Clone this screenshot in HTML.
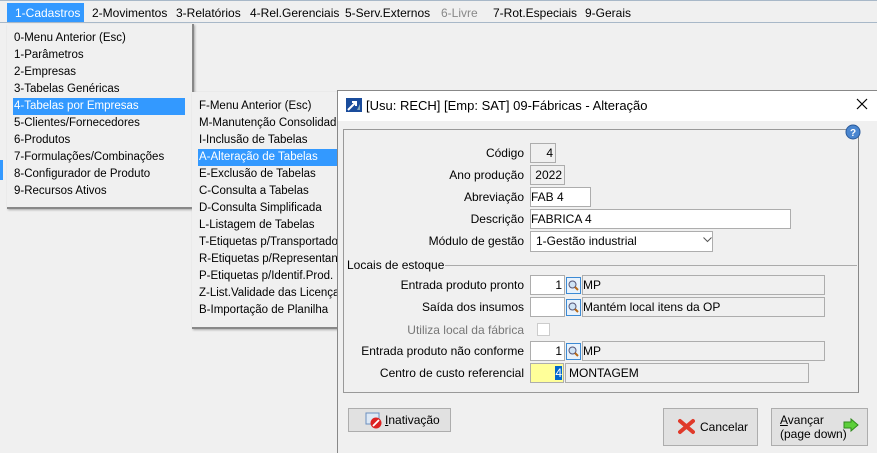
<!DOCTYPE html>
<html><head><meta charset="utf-8"><style>
*{box-sizing:border-box;margin:0;padding:0}
body{width:877px;height:453px;overflow:hidden;background:#f0f0f0;font-family:"Liberation Sans",sans-serif;font-size:12px;color:#000;position:relative}
.a{position:absolute;white-space:nowrap}
.mb{position:absolute;left:0;top:0;width:877px;height:23px;background:#f0f0f0;border-top:1px solid #a8b8c8;border-bottom:1px solid #a8b8c8}
.mi{position:absolute;top:5px;font-size:12px}
.menu{position:absolute;background:#f0f0f0;border-right:2px solid #888;border-bottom:2px solid #888;box-shadow:1px 1px 2px #aaa;overflow:hidden}
.it{position:absolute;left:7px;height:17px;line-height:17px;white-space:nowrap;font-size:11.5px}
.hl{background:#3399ff;color:#fff}
.lbl{position:absolute;text-align:right;width:200px;line-height:20px;white-space:nowrap}
.box{position:absolute;background:#fff;border:1px solid #adadad;height:20px;line-height:18px;padding:0 2px;white-space:nowrap}
.ro{background:#f0f0f0}
.btn{position:absolute;background:#e1e1e1;border:1px solid #adadad}
</style></head><body>
<div class="mb">
<div class="a" style="left:7px;top:2px;width:77px;height:19px;background:#3399ff"></div>
<span class="mi" style="left:15px;color:#fff">1-Cadastros</span>
<span class="mi" style="left:92px">2-Movimentos</span>
<span class="mi" style="left:176px">3-Relatórios</span>
<span class="mi" style="left:250px">4-Rel.Gerenciais</span>
<span class="mi" style="left:345px">5-Serv.Externos</span>
<span class="mi" style="left:441px;color:#888">6-Livre</span>
<span class="mi" style="left:493px">7-Rot.Especiais</span>
<span class="mi" style="left:585px">9-Gerais</span>
</div>
<div class="a" style="left:0;top:160px;width:3px;height:20px;background:#3399ff"></div>

<div class="menu" style="left:7px;top:24px;width:187px;height:185px">
<div class="it" style="top:6px">0-Menu Anterior (Esc)</div>
<div class="it" style="top:23px">1-Parâmetros</div>
<div class="it" style="top:40px">2-Empresas</div>
<div class="it" style="top:57px">3-Tabelas Genéricas</div>
<div class="it hl" style="top:74px;left:6px;width:172px;padding-left:1px">4-Tabelas por Empresas</div>
<div class="it" style="top:91px">5-Clientes/Fornecedores</div>
<div class="it" style="top:108px">6-Produtos</div>
<div class="it" style="top:125px">7-Formulações/Combinações</div>
<div class="it" style="top:142px">8-Configurador de Produto</div>
<div class="it" style="top:159px">9-Recursos Ativos</div>
</div>

<div class="menu" style="left:192px;top:92px;width:160px;height:237px">
<div class="it" style="top:6px">F-Menu Anterior (Esc)</div>
<div class="it" style="top:23px">M-Manutenção Consolidada</div>
<div class="it" style="top:40px">I-Inclusão de Tabelas</div>
<div class="it hl" style="top:57px;left:6px;width:150px;padding-left:1px">A-Alteração de Tabelas</div>
<div class="it" style="top:74px">E-Exclusão de Tabelas</div>
<div class="it" style="top:91px">C-Consulta a Tabelas</div>
<div class="it" style="top:108px">D-Consulta Simplificada</div>
<div class="it" style="top:125px">L-Listagem de Tabelas</div>
<div class="it" style="top:142px">T-Etiquetas p/Transportador</div>
<div class="it" style="top:159px">R-Etiquetas p/Representante</div>
<div class="it" style="top:176px">P-Etiquetas p/Identif.Prod.</div>
<div class="it" style="top:193px">Z-List.Validade das Licenças</div>
<div class="it" style="top:210px">B-Importação de Planilha</div>
</div>

<!-- dialog -->
<div class="a" style="left:337px;top:90px;width:540px;height:363px;background:#f0f0f0;border:1px solid #888;border-right:none;border-bottom:none"></div>
<div class="a" style="left:338px;top:91px;width:539px;height:30px;background:#fff"></div>
<svg class="a" style="left:346px;top:98px" width="16" height="14"><rect width="16" height="14" fill="#1a4c9c"/><path d="M2 12 L10 4 M6 4 H10 V8" stroke="#fff" stroke-width="2" fill="none"/><path d="M11 12 L14 6 L14 12Z" fill="#8ab"/></svg>
<div class="a" style="left:366px;top:98px;font-size:13px">[Usu: RECH] [Emp: SAT] 09-Fábricas - Alteração</div>
<svg class="a" style="left:856px;top:98px" width="12" height="12"><path d="M1 1 L11 11 M11 1 L1 11" stroke="#000" stroke-width="1.2"/></svg>

<div class="a" style="left:343px;top:129px;width:516px;height:264px;border:1px solid #999;border-right-color:#888"></div>
<svg class="a" style="left:845px;top:124px" width="16" height="16"><circle cx="8" cy="8" r="7" fill="#4a86d0" stroke="#2a5a9a"/><text x="8" y="12" font-size="10" font-weight="bold" fill="#fff" text-anchor="middle" font-family="Liberation Sans">?</text></svg>

<div class="lbl" style="left:324px;top:143px">Código</div>
<div class="box ro" style="left:530px;top:143px;width:26px;text-align:right">4</div>
<div class="lbl" style="left:324px;top:165px">Ano produção</div>
<div class="box ro" style="left:530px;top:165px;width:35px;text-align:right">2022</div>
<div class="lbl" style="left:324px;top:187px">Abreviação</div>
<div class="box" style="left:530px;top:187px;width:61px;padding-left:0">FAB 4</div>
<div class="lbl" style="left:324px;top:209px">Descrição</div>
<div class="box" style="left:530px;top:209px;width:261px;padding-left:0">FABRICA 4</div>
<div class="lbl" style="left:324px;top:231px">Módulo de gestão</div>
<div class="box" style="left:530px;top:231px;width:183px;padding-left:5px;height:21px">1-Gestão industrial</div>
<svg class="a" style="left:703px;top:237px" width="9" height="6"><path d="M0.5 0.5 L4.5 4.5 L8.5 0.5" stroke="#555" fill="none"/></svg>

<div class="a" style="left:347px;top:258px">Locais de estoque</div>
<div class="a" style="left:445px;top:265px;width:412px;height:1px;background:#aaa"></div>

<div class="lbl" style="left:324px;top:275px">Entrada produto pronto</div>
<div class="box" style="left:530px;top:275px;width:35px;text-align:right">1</div>
<svg class="a" style="left:566px;top:277px" width="15" height="17"><rect x="0.5" y="0.5" width="14" height="16" fill="#e8f2fc" stroke="#3c8ad4"/><circle cx="6.5" cy="7.5" r="3.5" fill="#cfe3f5" stroke="#557"/><path d="M9 10 L12 13" stroke="#b86a1a" stroke-width="2"/></svg>
<div class="box ro" style="left:582px;top:275px;width:243px;padding-left:0">MP</div>
<div class="lbl" style="left:324px;top:297px">Saída dos insumos</div>
<div class="box" style="left:530px;top:297px;width:35px"></div>
<svg class="a" style="left:566px;top:299px" width="15" height="17"><rect x="0.5" y="0.5" width="14" height="16" fill="#e8f2fc" stroke="#3c8ad4"/><circle cx="6.5" cy="7.5" r="3.5" fill="#cfe3f5" stroke="#557"/><path d="M9 10 L12 13" stroke="#b86a1a" stroke-width="2"/></svg>
<div class="box ro" style="left:582px;top:297px;width:243px;padding-left:0">Mantém local itens da OP</div>
<div class="lbl" style="left:324px;top:320px;color:#777">Utiliza local da fábrica</div>
<div class="a" style="left:537px;top:323px;width:13px;height:13px;border:1px solid #ccc;background:#fff"></div>
<div class="lbl" style="left:324px;top:341px">Entrada produto não conforme</div>
<div class="box" style="left:530px;top:341px;width:35px;text-align:right">1</div>
<svg class="a" style="left:566px;top:343px" width="15" height="17"><rect x="0.5" y="0.5" width="14" height="16" fill="#e8f2fc" stroke="#3c8ad4"/><circle cx="6.5" cy="7.5" r="3.5" fill="#cfe3f5" stroke="#557"/><path d="M9 10 L12 13" stroke="#b86a1a" stroke-width="2"/></svg>
<div class="box ro" style="left:582px;top:341px;width:243px;padding-left:0">MP</div>
<div class="lbl" style="left:324px;top:363px">Centro de custo referencial</div>
<div class="box" style="left:530px;top:363px;width:34px;background:#ffff99;text-align:right;padding-right:1px"><span style="background:#0066cc;color:#fff">4</span></div>
<div class="box ro" style="left:565px;top:363px;width:244px;padding-left:3px">MONTAGEM</div>

<div class="btn" style="left:348px;top:408px;width:103px;height:24px"></div>
<svg class="a" style="left:365px;top:412px" width="17" height="17"><rect x="1" y="1" width="13" height="11" fill="#dde8f5" stroke="#6a8fc0"/><circle cx="11" cy="11" r="5.5" fill="#d22"/><path d="M8 14 L14 8" stroke="#fff" stroke-width="1.8"/></svg>
<div class="a" style="left:385px;top:413px"><u>I</u>nativação</div>

<div class="btn" style="left:663px;top:408px;width:95px;height:38px"></div>
<svg class="a" style="left:678px;top:418px" width="17" height="17"><path d="M2 3 L15 14 M15 3 L2 14" stroke="#e03a2a" stroke-width="4" stroke-linecap="round"/></svg>
<div class="a" style="left:700px;top:420px">Cancelar</div>

<div class="btn" style="left:771px;top:408px;width:97px;height:38px"></div>
<div class="a" style="left:780px;top:413px;line-height:14px"><u>A</u>vançar<br>(page down)</div>
<svg class="a" style="left:843px;top:418px" width="16" height="14"><path d="M1 4 H8 V1 L15 7 L8 13 V10 H1Z" fill="#5ccf3a" stroke="#2f8a1c"/></svg>
</body></html>
